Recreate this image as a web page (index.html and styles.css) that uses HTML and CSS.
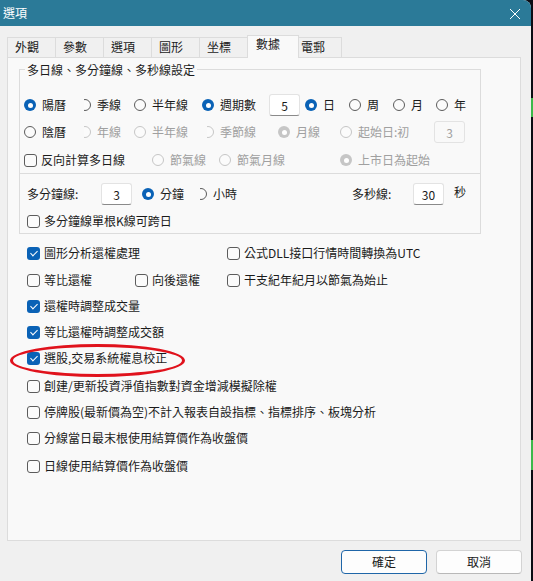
FILE: index.html
```html
<!DOCTYPE html>
<html lang="zh-Hant">
<head>
  <meta charset="UTF-8">
  <meta name="viewport" content="width=device-width, initial-scale=1.0">
  <title>選項</title>
  <link rel="stylesheet" href="styles.css">
</head>
<body>
  <div class="dialog">
    <!-- 標題列 -->
    <div class="titlebar">
      <span>選項</span>
      <svg class="close-icon" width="10" height="10" viewBox="0 0 10 10">
        <path d="M0 0L10 10M10 0L0 10" stroke="#ffffff" stroke-width="1" fill="none"/>
      </svg>
    </div>

    <!-- 分頁 -->
    <div class="tabs">
      <div class="tab">外觀</div>
      <div class="tab">參數</div>
      <div class="tab">選項</div>
      <div class="tab">圖形</div>
      <div class="tab">坐標</div>
      <div class="tab active">數據</div>
      <div class="tab last">電郵</div>
    </div>

    <div class="panel">
      <!-- 多日線設定 -->
      <div class="group group-top">
        <span class="legend">多日線、多分鐘線、多秒線設定</span>
        <div class="row row-a">
          <label class="opt"><span class="radio on"></span>陽曆</label>
          <label class="opt"><span class="radio clip"></span>季線</label>
          <label class="opt"><span class="radio"></span>半年線</label>
          <label class="opt"><span class="radio on"></span>週期數</label>
          <input class="num" value="5">
          <label class="opt"><span class="radio on"></span>日</label>
          <label class="opt"><span class="radio"></span>周</label>
          <label class="opt"><span class="radio"></span>月</label>
          <label class="opt"><span class="radio"></span>年</label>
        </div>
        <div class="row row-b">
          <label class="opt"><span class="radio"></span>陰曆</label>
          <label class="opt off"><span class="radio clip"></span>年線</label>
          <label class="opt off"><span class="radio"></span>半年線</label>
          <label class="opt off"><span class="radio clip"></span>季節線</label>
          <label class="opt off"><span class="radio on"></span>月線</label>
          <label class="opt off"><span class="radio"></span>起始日:初</label>
          <input class="num" value="3" disabled>
        </div>
        <div class="row row-c">
          <label class="chk"><span class="box"></span>反向計算多日線</label>
          <label class="opt off"><span class="radio"></span>節氣線</label>
          <label class="opt off"><span class="radio"></span>節氣月線</label>
          <label class="opt off"><span class="radio on"></span>上市日為起始</label>
        </div>
      </div>

      <!-- 多分鐘線 / 多秒線 -->
      <div class="group group-bottom">
        <div class="row row-min">
          <span>多分鐘線:</span>
          <input class="num" value="3">
          <label class="opt"><span class="radio on"></span>分鐘</label>
          <label class="opt"><span class="radio clip"></span>小時</label>
          <span>多秒線:</span>
          <input class="num" value="30">
          <span class="unit">秒</span>
        </div>
        <div class="row row-k">
          <label class="chk"><span class="box"></span>多分鐘線單根K線可跨日</label>
        </div>
      </div>

      <!-- 還權選項 -->
      <div class="check-list">
        <div class="check-row first">
          <label class="chk wide"><span class="box on"></span>圖形分析還權處理</label>
          <label class="chk"><span class="box"></span>公式DLL接口行情時間轉換為UTC</label>
        </div>
        <div class="check-row">
          <label class="chk"><span class="box"></span>等比還權</label>
          <label class="chk"><span class="box"></span>向後還權</label>
          <label class="chk"><span class="box"></span>干支紀年紀月以節氣為始止</label>
        </div>
        <div class="check-row">
          <label class="chk wide"><span class="box on"></span>還權時調整成交量</label>
        </div>
        <div class="check-row">
          <label class="chk wide"><span class="box on"></span>等比還權時調整成交額</label>
        </div>
        <div class="check-row">
          <label class="chk wide"><span class="box on"></span>選股,交易系統權息校正</label>
        </div>
        <div class="check-row spaced">
          <label class="chk full"><span class="box"></span>創建/更新投資淨值指數對資金增減模擬除權</label>
        </div>
        <div class="check-row">
          <label class="chk full"><span class="box"></span>停牌股(最新價為空)不計入報表自設指標、指標排序、板塊分析</label>
        </div>
        <div class="check-row">
          <label class="chk full"><span class="box"></span>分線當日最末根使用結算價作為收盤價</label>
        </div>
        <div class="check-row spaced">
          <label class="chk full"><span class="box"></span>日線使用結算價作為收盤價</label>
        </div>
      </div>

      <!-- 紅色標註圈 -->
      <div class="mark"></div>
    </div>

    <!-- 按鈕 -->
    <div class="footer">
      <button class="btn primary">確定</button>
      <button class="btn">取消</button>
    </div>
  </div>

  <!-- 背後的圖表邊緣 -->
  <div class="chart-edge">
    <span class="tick green"></span>
    <span class="tick green low"></span>
  </div>
</body>
</html>
```

FILE: styles.css
```css
/* Base */
:root {
  --title-color: #2b7a98;
  --dialog-bg: #f0f0f0;
  --panel-bg: #f9f9f9;
  --line-color: #dcdcdc;
  --text-color: #1b1b1b;
  --muted-color: #a0a0a0;
  --accent: #0a62b6;
}

* {
  margin: 0;
  padding: 0;
  box-sizing: border-box;
}

body {
  width: 533px;
  height: 581px;
  overflow: hidden;
  display: flex;
  background-color: #0b0c14;
  font-family: "Noto Sans CJK TC", "Noto Sans", sans-serif;
  font-size: 12px;
  line-height: 16px;
  color: var(--text-color);
}

.dialog {
  width: 531px;
  height: 581px;
  background-color: var(--dialog-bg);
  border-top-right-radius: 8px;
  overflow: hidden;
  display: flex;
  flex-direction: column;
}

/* Title bar */
.titlebar {
  height: 26px;
  background-color: var(--title-color);
  color: #ffffff;
  display: flex;
  align-items: center;
  justify-content: space-between;
  padding: 0 11px 0 3px;
}

.close-icon {
  margin-top: 1px;
}

/* Tabs */
.tabs {
  height: 31px;
  display: flex;
  align-items: flex-end;
  padding-left: 7px;
}

.tab {
  width: 49px;
  height: 20px;
  margin-right: -1px;
  padding: 1px 0 0 7px;
  border: 1px solid var(--line-color);
  border-bottom: none;
  background-color: var(--dialog-bg);
}

.tab.active {
  position: relative;
  z-index: 2;
  width: 52px;
  height: 23px;
  margin-right: -4px;
  margin-bottom: -1px;
  padding: 0 0 0 8px;
  background-color: var(--panel-bg);
}

.tab.last {
  width: 47px;
  padding-left: 5px;
}

/* Panel */
.panel {
  position: relative;
  width: 514px;
  height: 484px;
  margin-left: 7px;
  padding: 11px 0 0 11px;
  border: 1px solid var(--line-color);
  background-color: var(--panel-bg);
}

.group {
  position: relative;
  width: 462px;
  border: 1px solid var(--line-color);
}

.group-top {
  padding: 23px 0 1px 4px;
  display: flex;
  flex-direction: column;
  gap: 3px;
}

.group-top .row-c {
  margin-top: 1px;
}

.group-bottom {
  border-top: none;
  padding: 9px 0 2px 7px;
  display: flex;
  flex-direction: column;
  gap: 6px;
}

.legend {
  position: absolute;
  top: -8px;
  left: 5px;
  padding: 0 2px;
  background-color: var(--panel-bg);
}

.row {
  display: grid;
  align-items: center;
  height: 24px;
}

.row-a { grid-template-columns: 55px 55px 68px 67px 36px 44px 44px 43px auto; }
.row-b { grid-template-columns: 55px 55px 68px 76px 62px 94px auto; }
.row-c { grid-template-columns: 128px 67px 121px auto; }

.row-min {
  height: 22px;
  grid-template-columns: 74px 41px 53px 157px 61px 41px auto;
}

.row-k {
  height: 20px;
}

.unit {
  padding-bottom: 4px;
}

/* Radio & checkbox */
.opt, .chk {
  display: flex;
  align-items: center;
  white-space: nowrap;
}

.opt { gap: 6px; }
.chk { gap: 4px; }

.radio {
  position: relative;
  flex: none;
  width: 12px;
  height: 12px;
  border-radius: 50%;
  border: 1px solid #5c5c5c;
  background-color: #fbfbfb;
}

.radio.clip {
  clip-path: inset(0 0 0 5px);
}

.radio.on {
  border: none;
  background-color: var(--accent);
}

.radio.on::after {
  content: '';
  position: absolute;
  top: 3.5px;
  left: 3.5px;
  width: 5px;
  height: 5px;
  border-radius: 50%;
  background-color: #ffffff;
}

.opt.off {
  color: var(--muted-color);
}

.opt.off .radio {
  border-color: #c6c6c6;
}

.opt.off .radio.on {
  background-color: #c6c6c6;
}

.box {
  position: relative;
  flex: none;
  width: 13px;
  height: 13px;
  border: 1px solid #5c5c5c;
  border-radius: 3px;
  background-color: #fbfbfb;
}

.box.on {
  border: none;
  background-color: var(--accent);
}

.box.on::after {
  content: '';
  position: absolute;
  top: 2px;
  left: 4.5px;
  width: 3px;
  height: 6px;
  border-right: 1.5px solid #ffffff;
  border-bottom: 1.5px solid #ffffff;
  transform: rotate(45deg);
}

/* Number inputs */
.num {
  width: 31px;
  height: 22px;
  padding: 0;
  border: 1px solid #e3e3e3;
  border-bottom-color: #8a8a8a;
  border-radius: 3px;
  background-color: #ffffff;
  font: inherit;
  color: var(--text-color);
  text-align: center;
}

.num:disabled {
  border-bottom-color: #e3e3e3;
  background-color: var(--panel-bg);
  color: var(--muted-color);
}

/* Check list */
.check-list {
  margin-top: 6px;
  padding-left: 8px;
  display: flex;
  flex-direction: column;
}

.check-row {
  height: 26px;
  display: grid;
  grid-template-columns: 108px 92px auto;
  align-items: center;
}

.check-row.first { margin-bottom: 1px; }
.check-row.spaced { margin-top: 2px; }

.chk.wide { grid-column: span 2; }
.chk.full { grid-column: 1 / -1; }

/* Red annotation */
.mark {
  position: absolute;
  left: 2px;
  top: 286px;
  width: 175px;
  height: 33px;
  border: 3px solid #e0121c;
  border-radius: 50%;
}

/* Footer buttons */
.footer {
  display: flex;
  justify-content: flex-end;
  gap: 9px;
  padding: 9px 9px 0 0;
}

.btn {
  width: 86px;
  height: 24px;
  border: 1px solid #d3d3d3;
  border-bottom-color: #b8b8b8;
  border-radius: 4px;
  background-color: #fdfdfd;
  font: inherit;
  color: var(--text-color);
}

.btn.primary {
  border-color: #1f66a8;
}

/* Chart behind the dialog */
.chart-edge {
  position: relative;
  flex: 1;
}

.tick {
  position: absolute;
  left: 0;
  width: 2px;
}

.tick.green {
  top: 98px;
  height: 19px;
  background-color: #3cb84a;
}

.tick.green.low {
  top: 440px;
  height: 30px;
}
```
